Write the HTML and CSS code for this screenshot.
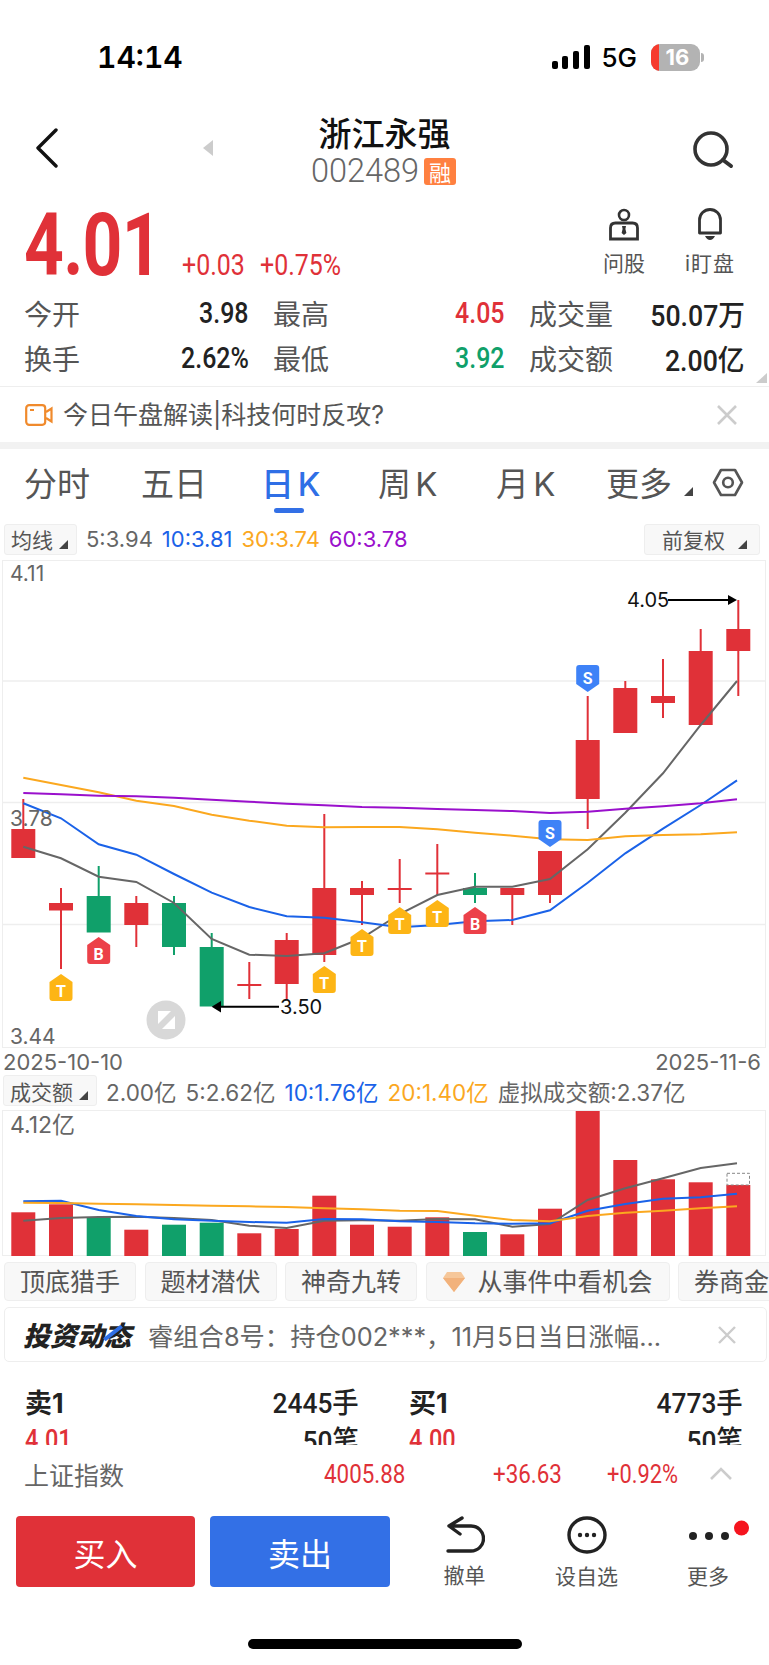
FILE: index.html
```
<!DOCTYPE html>
<html lang="zh-CN">
<head>
    <meta charset="UTF-8">
    <title>浙江永强 002489</title>
    <link rel="stylesheet" href="styles.css">
</head>
<body>
    <!-- Status bar -->
    <div class="status-bar">
        <span class="clock">14:14</span>
        <div class="status-right">
            <svg class="signal" width="38" height="24" viewBox="0 0 38 24">
                <rect x="0" y="16" width="6" height="8" rx="2"/>
                <rect x="10" y="11" width="6" height="13" rx="2"/>
                <rect x="21" y="6" width="6" height="18" rx="2"/>
                <rect x="32" y="0" width="6" height="24" rx="2"/>
            </svg>
            <span class="net">5G</span>
            <div class="battery"><span class="battery-low"></span><span class="battery-num">16</span></div>
            <span class="battery-nub"></span>
        </div>
    </div>

    <!-- Nav -->
    <div class="nav">
        <svg class="nav-back" width="24" height="40" viewBox="0 0 24 40"><path d="M21 2 L3 20 L21 38" fill="none" stroke="#111" stroke-width="3.4" stroke-linecap="round" stroke-linejoin="round"/></svg>
        <span class="nav-prev"></span>
        <div class="nav-title">
            <div class="stock-name">浙江永强</div>
            <div class="stock-code">002489<span class="rong">融</span></div>
        </div>
        <svg class="nav-search" width="42" height="38" viewBox="0 0 42 38"><circle cx="19" cy="18" r="16" fill="none" stroke="#333" stroke-width="3.6"/><path d="M31 29 L39 35" stroke="#333" stroke-width="4" stroke-linecap="round"/></svg>
    </div>

    <!-- Quote -->
    <div class="quote">
        <span class="price din red">4.01</span>
        <span class="change din red">+0.03</span>
        <span class="change din red">+0.75%</span>
        <div class="quote-tools">
            <div class="tool">
                <svg width="32" height="33" viewBox="0 0 32 33"><circle cx="16" cy="7" r="5" fill="none" stroke="#333" stroke-width="2.6"/><path d="M2.5 31 V20 Q2.5 15 7.5 15 H24.5 Q29.5 15 29.5 20 V31 Z" fill="none" stroke="#333" stroke-width="2.8"/><path d="M14 18 H18 L17.4 21 L18.4 25 L16 27 L13.6 25 L14.6 21 Z" fill="#333"/></svg>
                <span>问股</span>
            </div>
            <div class="tool">
                <svg width="26" height="33" viewBox="0 0 26 33"><path d="M2.5 25 V12 a10.5 10.5 0 0 1 21 0 V25 Z" fill="none" stroke="#333" stroke-width="2.8" stroke-linejoin="round"/><path d="M8 28 H18 Q16 32 13 32 Q10 32 8 28 Z" fill="#333"/></svg>
                <span class="tool-watch">i盯盘</span>
            </div>
        </div>
    </div>

    <!-- Stats -->
    <div class="stats">
        <div class="stat"><span>今开</span><b class="din">3.98</b></div>
        <div class="stat"><span>最高</span><b class="din red">4.05</b></div>
        <div class="stat"><span>成交量</span><b class="din wide">50.07万</b></div>
        <div class="stat"><span>换手</span><b class="din">2.62%</b></div>
        <div class="stat"><span>最低</span><b class="din green">3.92</b></div>
        <div class="stat"><span>成交额</span><b class="din wide">2.00亿</b></div>
        <span class="corner"></span>
    </div>

    <!-- Banner -->
    <div class="banner">
        <svg width="28" height="22" viewBox="0 0 28 22"><rect x="1.2" y="1.2" width="19" height="19.6" rx="3" fill="none" stroke="#f08a2c" stroke-width="2.2"/><path d="M21 8 L26.5 4.5 V17.5 L21 14" fill="none" stroke="#f08a2c" stroke-width="2.2"/><path d="M5 6 H9" stroke="#f08a2c" stroke-width="2"/></svg>
        <span class="banner-text">今日午盘解读|科技何时反攻?</span>
        <svg class="close" width="20" height="20" viewBox="0 0 20 20"><path d="M1 1 L19 19 M19 1 L1 19" stroke="#ccc" stroke-width="2.6"/></svg>
    </div>
    <div class="gap"></div>

    <!-- Period tabs -->
    <div class="tabs">
        <span>分时</span>
        <span>五日</span>
        <span class="tab-on">日 K</span>
        <span>周 K</span>
        <span>月 K</span>
        <span class="tab-more">更多<i class="tri"></i></span>
        <svg width="32" height="29" viewBox="0 0 32 29"><path d="M9 2 H23 L30 14.5 L23 27 H9 L2 14.5 Z" fill="none" stroke="#555" stroke-width="2.6" stroke-linejoin="round"/><circle cx="16" cy="14.5" r="4.8" fill="none" stroke="#555" stroke-width="2.6"/></svg>
    </div>

    <!-- MA legend -->
    <div class="legend ma-row">
        <span class="pick pick-ma">均线<i class="tri"></i></span>
        <span class="grey">5:3.94</span>
        <span class="blue">10:3.81</span>
        <span class="orange">30:3.74</span>
        <span class="purple">60:3.78</span>
        <span class="pick pick-fq">前复权<i class="tri"></i></span>
    </div>

    <!-- Candles -->
    <svg class="chart" width="769" height="488" viewBox="0 0 769 488">
        <defs>
            <path id="tag-up" d="M0 0 L11.5 8 V24 Q11.5 27 8.5 27 H-8.5 Q-11.5 27 -11.5 24 V8 Z"/>
            <path id="tag-down" d="M-8.5 0 H8.5 Q11.5 0 11.5 3 V19 L0 27 L-11.5 19 V3 Q-11.5 0 -8.5 0 Z"/>
        </defs>
        <rect class="frame" x="2.5" y="0.5" width="763" height="487"/>
        <path class="grid" d="M3 121 H765 M3 242.5 H765 M3 364.5 H765"/>

        <g class="up">
            <rect x="22.3" y="239" width="2" height="30"/><rect x="11.3" y="269" width="24" height="29"/>
            <rect x="60" y="328" width="2" height="81"/><rect x="49" y="343" width="24" height="7.5"/>
            <rect x="135.3" y="336" width="2" height="51"/><rect x="124.3" y="343" width="24" height="22"/>
            <rect x="248.3" y="402" width="2" height="37"/><rect x="237.3" y="424" width="24" height="2"/>
            <rect x="285.7" y="373" width="2" height="66"/><rect x="274.7" y="380" width="24" height="44"/>
            <rect x="323.3" y="254" width="2" height="148"/><rect x="312.3" y="328" width="24" height="67"/>
            <rect x="361" y="321" width="2" height="44"/><rect x="350" y="328" width="24" height="7"/>
            <rect x="398.7" y="299" width="2" height="44"/><rect x="387.7" y="328" width="24" height="2"/>
            <rect x="436.3" y="284" width="2" height="51"/><rect x="425.3" y="312.5" width="24" height="2"/>
            <rect x="511.3" y="328" width="2" height="37"/><rect x="500.3" y="328" width="24" height="7"/>
            <rect x="549" y="291" width="2" height="52"/><rect x="538" y="291" width="24" height="44"/>
            <rect x="586.7" y="136" width="2" height="133"/><rect x="575.7" y="180" width="24" height="59"/>
            <rect x="624.3" y="121" width="2" height="52"/><rect x="613.3" y="128" width="24" height="45"/>
            <rect x="662" y="99" width="2" height="59"/><rect x="651" y="136" width="24" height="7"/>
            <rect x="699.7" y="69" width="2" height="96"/><rect x="688.7" y="91" width="24" height="74"/>
            <rect x="737.3" y="40" width="2" height="96"/><rect x="726.3" y="69" width="24" height="22"/>
        </g>
        <g class="down">
            <rect x="97.7" y="306" width="2" height="30"/><rect x="86.7" y="336" width="24" height="36.5"/>
            <rect x="173" y="336" width="2" height="59"/><rect x="162" y="343" width="24" height="44"/>
            <rect x="210.7" y="373" width="2" height="73"/><rect x="199.7" y="387" width="24" height="59.5"/>
            <rect x="474" y="313" width="2" height="30"/><rect x="463" y="328" width="24" height="7"/>
        </g>

        <polyline class="line ma5" points="23.3,286.7 61,298.3 98.7,316.7 136.3,322 174,343 211.7,379 249.3,394.7 286.7,396 324.3,393.3 362,378 399.7,354 437.3,335 475,326.7 512.3,326.7 550,319 587.7,289.3 625.3,252.7 663,213.3 700.7,165 737,121"/>
        <polyline class="line ma10" points="23.3,243.3 61,258.3 98.7,284.3 136.3,294.7 174,314 211.7,332.7 249.3,347 286.7,356.3 324.3,357.7 362,362.3 399.7,367.3 437.3,365 475,361.3 512.3,360 550,350.3 587.7,322.7 625.3,293.3 663,268.7 700.7,245 737,220.3"/>
        <polyline class="line ma30" points="23.3,217.7 61,225 98.7,232.3 136.3,240.7 174,246 211.7,254.7 249.3,260.7 286.7,265.7 324.3,267.3 362,267 399.7,267 437.3,269.3 475,272.7 512.3,275.7 550,279.3 587.7,280 625.3,276.3 663,275 700.7,274.3 737,272.3"/>
        <polyline class="line ma60" points="23.3,233 61,234.3 98.7,235.7 136.3,236.3 174,237.7 211.7,239.7 249.3,241.7 286.7,243.7 324.3,245.3 362,247 399.7,247.7 437.3,249 475,250 512.3,251 550,253 587.7,251.7 625.3,248.7 663,246.3 700.7,243.3 737,239.3"/>

        <!-- Trade markers -->
        <use href="#tag-up" x="61" y="414" class="tag-t"/><text class="tag-text" x="61" y="437">T</text>
        <use href="#tag-up" x="98.7" y="377" class="tag-b"/><text class="tag-text" x="98.7" y="400">B</text>
        <use href="#tag-up" x="324.3" y="406" class="tag-t"/><text class="tag-text" x="324.3" y="429">T</text>
        <use href="#tag-up" x="362" y="369" class="tag-t"/><text class="tag-text" x="362" y="392">T</text>
        <use href="#tag-up" x="399.7" y="347" class="tag-t"/><text class="tag-text" x="399.7" y="370">T</text>
        <use href="#tag-up" x="437.3" y="340" class="tag-t"/><text class="tag-text" x="437.3" y="363">T</text>
        <use href="#tag-up" x="475" y="347" class="tag-b"/><text class="tag-text" x="475" y="370">B</text>
        <use href="#tag-down" x="550" y="260" class="tag-s"/><text class="tag-text" x="550" y="279">S</text>
        <use href="#tag-down" x="587.7" y="105" class="tag-s"/><text class="tag-text" x="587.7" y="124">S</text>

        <!-- High / low arrows -->
        <path d="M218 446.7 H279 M668 40 H731" stroke="#000" stroke-width="2"/>
        <polygon points="211.7,446.7 221,441 221,452.4"/>
        <polygon points="737,40 728,35 728,45"/>
        <text class="mark" x="280" y="454">3.50</text>
        <text class="mark" x="627" y="47">4.05</text>

        <text class="axis" x="10" y="21">4.11</text>
        <text class="axis" x="10" y="266">3.78</text>
        <text class="axis" x="10" y="484">3.44</text>

        <!-- Fullscreen toggle -->
        <circle cx="166" cy="460" r="19.5" fill="#d8d8d8"/>
        <polygon points="158,451 171,451 158,464" fill="#fff"/>
        <polygon points="175,456 175,469 162,469" fill="#fff"/>
    </svg>

    <div class="dates"><span>2025-10-10</span><span>2025-11-6</span></div>

    <!-- Volume legend -->
    <div class="legend vol-row">
        <span class="pick pick-vol">成交额<i class="tri"></i></span>
        <span class="grey">2.00亿</span>
        <span class="grey">5:2.62亿</span>
        <span class="blue">10:1.76亿</span>
        <span class="orange">20:1.40亿</span>
        <span class="grey">虚拟成交额:2.37亿</span>
    </div>

    <!-- Volume -->
    <svg class="vol" width="769" height="146" viewBox="0 0 769 146">
        <rect class="frame" x="2.5" y="0.5" width="763" height="145"/>
        <g class="up">
            <rect x="11.3" y="102.3" width="24" height="43.7"/>
            <rect x="49" y="94.3" width="24" height="51.7"/>
            <rect x="124.3" y="119.7" width="24" height="26.3"/>
            <rect x="237.3" y="123.3" width="24" height="22.7"/>
            <rect x="274.7" y="119" width="24" height="27"/>
            <rect x="312.3" y="85.7" width="24" height="60.3"/>
            <rect x="350" y="114.7" width="24" height="31.3"/>
            <rect x="387.7" y="116.7" width="24" height="29.3"/>
            <rect x="425.3" y="107.3" width="24" height="38.7"/>
            <rect x="500.3" y="124.3" width="24" height="21.7"/>
            <rect x="538" y="98.7" width="24" height="47.3"/>
            <rect x="575.7" y="1" width="24" height="145"/>
            <rect x="613.3" y="50" width="24" height="96"/>
            <rect x="651" y="69.3" width="24" height="76.7"/>
            <rect x="688.7" y="72.3" width="24" height="73.7"/>
            <rect x="726.3" y="75" width="24" height="71"/>
        </g>
        <g class="down">
            <rect x="86.7" y="107.7" width="24" height="38.3"/>
            <rect x="162" y="114.7" width="24" height="31.3"/>
            <rect x="199.7" y="112.7" width="24" height="33.3"/>
            <rect x="463" y="122" width="24" height="24"/>
        </g>
        <rect x="727" y="63.3" width="22.5" height="11.7" fill="none" stroke="#888" stroke-width="1" stroke-dasharray="3 2"/>
        <polyline class="line ma5" points="23.3,110.7 61,108 98.7,107 136.3,106.7 174,108 211.7,110 249.3,115.7 286.7,118 324.3,110.7 362,110.3 399.7,110.7 437.3,109 475,109.3 512.3,116.7 550,114 587.7,90 625.3,78.3 663,68.3 700.7,58 737,53.3"/>
        <polyline class="line ma10" points="23.3,91.3 61,90.7 98.7,100 136.3,106 174,109.3 211.7,110.7 249.3,112 286.7,112.7 324.3,109 362,109.3 399.7,111.3 437.3,112 475,113.3 512.3,113.7 550,113.3 587.7,100.7 625.3,94 663,88.7 700.7,87.3 737,83.7"/>
        <polyline class="line ma30" points="23.3,92.7 61,93 98.7,93.7 136.3,94.3 174,95 211.7,95.7 249.3,96.3 286.7,97 324.3,98.3 362,99.3 399.7,100.7 437.3,101 475,105.7 512.3,110 550,111.3 587.7,106 625.3,102.7 663,100.7 700.7,98.3 737,96.3"/>
        <text class="axis axis-vol" x="10" y="23">4.12亿</text>
    </svg>

    <!-- Feature tags -->
    <div class="tags">
        <span class="tag">顶底猎手</span>
        <span class="tag">题材潜伏</span>
        <span class="tag">神奇九转</span>
        <span class="tag tag-wide">
            <svg width="24" height="22" viewBox="0 0 24 22"><path d="M5 1 H19 L23 7 L12 21 L1 7 Z" fill="#f6c79a"/><path d="M1 7 H23 L12 21 Z" fill="#f2b27c"/></svg>
            从事件中看机会
        </span>
        <span class="tag">券商金股</span>
    </div>

    <!-- News -->
    <div class="news">
        <span class="news-logo">投资动态<i class="news-slash"></i></span>
        <span class="news-text">睿组合8号：持仓002***，11月5日当日涨幅...</span>
        <svg class="close" width="18" height="18" viewBox="0 0 18 18"><path d="M1 1 L17 17 M17 1 L1 17" stroke="#ccc" stroke-width="2.4"/></svg>
    </div>

    <!-- Order book, cut off by the index bar -->
    <div class="book">
        <div class="book-col">
            <div class="book-row"><b>卖1</b><b class="din">2445手</b></div>
            <div class="book-row"><span class="din red">4.01</span><span class="din">50笔</span></div>
        </div>
        <div class="book-col">
            <div class="book-row"><b>买1</b><b class="din">4773手</b></div>
            <div class="book-row"><span class="din red">4.00</span><span class="din">50笔</span></div>
        </div>
    </div>

    <!-- Index bar -->
    <div class="index-bar">
        <span class="index-name">上证指数</span>
        <span class="din red index-value">4005.88</span>
        <span class="din red index-diff">+36.63</span>
        <span class="din red index-pct">+0.92%</span>
        <svg width="24" height="14" viewBox="0 0 24 14"><path d="M2 12 L12 2 L22 12" fill="none" stroke="#ccc" stroke-width="2.6"/></svg>
    </div>

    <!-- Actions -->
    <div class="actions">
        <button class="btn btn-buy">买入</button>
        <button class="btn btn-sell">卖出</button>
        <div class="action act-undo">
            <svg width="40" height="37" viewBox="0 0 40 37"><path d="M17 2 L4 10 L15 18 M5 10 H26 a12.5 12.5 0 0 1 0 25 H3" fill="none" stroke="#222" stroke-width="3.4" stroke-linecap="round" stroke-linejoin="round"/></svg>
            <span>撤单</span>
        </div>
        <div class="action act-fav">
            <svg width="40" height="38" viewBox="0 0 40 38"><ellipse cx="20" cy="19" rx="18" ry="17" fill="none" stroke="#222" stroke-width="3.4"/><circle cx="13" cy="19" r="2.2" fill="#222"/><circle cx="20" cy="19" r="2.2" fill="#222"/><circle cx="27" cy="19" r="2.2" fill="#222"/></svg>
            <span>设自选</span>
        </div>
        <div class="action act-more">
            <svg class="more-dots" width="64" height="38" viewBox="0 0 64 38"><circle cx="17" cy="20" r="4" fill="#222"/><circle cx="33" cy="20" r="4" fill="#222"/><circle cx="49" cy="20" r="4" fill="#222"/><circle cx="65.5" cy="12" r="7.5" fill="#f5141e"/></svg>
            <span>更多</span>
        </div>
    </div>

    <div class="home-bar"></div>
</body>
</html>
```

FILE: styles.css
```
* {
    box-sizing: border-box;
}

html, body {
    margin: 0;
    padding: 0;
}

body {
    width: 769px;
    height: 1665px;
    overflow: hidden;
    background: #fff;
    color: #555;
    font-family: Inter, "Noto Sans CJK SC", sans-serif;
}

.red { color: #e03138; }
.green { color: #10a06a; }
.grey { color: #666; }
.blue { color: #1a62e8; }
.orange { color: #fba81f; }
.purple { color: #9a10cc; }

/* The app's numbers are a condensed face, none is installed so squeeze Roboto */
.din {
    display: inline-block;
    font-family: Roboto, "Noto Sans CJK SC", sans-serif;
    white-space: nowrap;
    transform: scaleX(0.86);
    transform-origin: left center;
}

/* Status bar */
.status-bar {
    height: 105px;
    display: flex;
    justify-content: space-between;
    padding: 37px 0 0 97px;
}

.clock {
    font-size: 30px;
    font-weight: 600;
    line-height: 40px;
    color: #000;
    font-variant-numeric: tabular-nums;
}

.status-right {
    display: flex;
    align-items: center;
    height: 40px;
    padding-right: 65px;
}

.signal {
    margin-right: 11px;
}

.net {
    font-size: 26px;
    font-weight: 500;
    color: #000;
    margin-right: 14px;
}

.battery {
    position: relative;
    width: 49px;
    height: 27px;
    border-radius: 9px;
    overflow: hidden;
    background: #b3b3b3;
    text-align: center;
}

.battery-low {
    position: absolute;
    left: 0;
    top: 0;
    width: 8px;
    height: 27px;
    background: #f63b2e;
}

.battery-num {
    position: relative;
    font: 700 22px/27px Inter, sans-serif;
    color: #fff;
    padding-left: 4px;
}

.battery-nub {
    width: 3px;
    height: 9px;
    margin-left: 1px;
    border-radius: 0 3px 3px 0;
    background: #b3b3b3;
}

/* Nav */
.nav {
    position: relative;
    height: 90px;
    display: flex;
    justify-content: center;
}

.nav-back {
    position: absolute;
    left: 35px;
    top: 23px;
}

.nav-prev {
    position: absolute;
    left: 203px;
    top: 35px;
    border-style: solid;
    border-width: 8px 10px 8px 0;
    border-color: transparent #ccc transparent transparent;
}

.nav-title {
    text-align: center;
    width: 180px;
}

.stock-name {
    font-size: 33px;
    line-height: 38px;
    font-weight: 500;
    color: #111;
    margin-top: 10px;
}

.stock-code {
    display: flex;
    align-items: center;
    justify-content: center;
    font: 300 32.5px/36px Roboto, sans-serif;
    color: #666;
    white-space: nowrap;
    margin-left: -2px;
}

.rong {
    width: 32px;
    height: 27px;
    margin-left: 5px;
    border-radius: 3px;
    background: #ff8040;
    color: #fff;
    font: 400 22px/27px "Noto Sans CJK SC", sans-serif;
    text-align: center;
}

.nav-search {
    position: absolute;
    left: 692px;
    top: 26px;
}

/* Quote */
.quote {
    height: 95px;
    display: flex;
    align-items: flex-start;
    padding-left: 24px;
}

.price {
    width: 129px;
    margin: 2px 29px 0 0;
    font-size: 87px;
    font-weight: 700;
    line-height: 96px;
    letter-spacing: -1px;
    transform: scaleX(0.8);
}

.change {
    width: 78px;
    font-size: 29px;
    line-height: 34px;
    margin-top: 53px;
}

.quote-tools {
    margin-left: auto;
    display: flex;
    gap: 40px;
    padding: 13px 34px 0 0;
}

.tool {
    display: flex;
    flex-direction: column;
    align-items: center;
    font-size: 21px;
    line-height: 30px;
    gap: 8px;
    color: #555;
}

.tool-watch {
    letter-spacing: 1px;
}

/* Stats */
.stats {
    position: relative;
    height: 97px;
    display: grid;
    grid-template-columns: 225px 232px 216px;
    grid-auto-rows: 45px;
    column-gap: 24px;
    padding-left: 24px;
    border-bottom: 1px solid #eee;
}

.stat {
    display: flex;
    justify-content: space-between;
    align-items: center;
    font-size: 28px;
    color: #555;
}

.stat b {
    font-size: 29px;
    font-weight: 500;
    color: #222;
    transform-origin: right center;
}

.stat b.red { color: #e03138; }
.stat b.green { color: #10a06a; }
.stat b.wide { transform: scaleX(0.92); }

.corner {
    position: absolute;
    right: 2px;
    bottom: 3px;
    border-style: solid;
    border-width: 0 0 10px 11px;
    border-color: transparent transparent #ccc transparent;
}

/* Banner */
.banner {
    height: 55px;
    display: flex;
    align-items: center;
    padding: 0 32px 0 25px;
}

.banner-text {
    margin: 0 0 4px 10px;
    font-size: 25px;
    color: #555;
    white-space: nowrap;
}

.close {
    margin-left: auto;
}

.gap {
    height: 7px;
    background: #f2f2f2;
}

/* Period tabs */
.tabs {
    height: 70px;
    display: grid;
    grid-template-columns: 117px 120px 117px 118px 110px 106px 32px;
    align-items: center;
    padding: 0 0 4px 24px;
    font-size: 33px;
    word-spacing: -5px;
    color: #555;
    white-space: nowrap;
}

.tab-on {
    position: relative;
    color: #2f6fe6;
    font-weight: 500;
}

.tab-on::after {
    content: "";
    position: absolute;
    left: 13px;
    top: 50px;
    width: 30px;
    height: 5px;
    border-radius: 3px;
    background: #3370e6;
}

.tri {
    display: inline-block;
    border-style: solid;
    border-width: 0 0 9px 9px;
    border-color: transparent transparent #444 transparent;
}

.tab-more .tri {
    margin-left: 12px;
}

/* Legends above the charts */
.legend {
    display: flex;
    align-items: center;
    white-space: nowrap;
}

.ma-row {
    height: 41px;
    padding: 0 9px 1px 4px;
    gap: 9px;
    font-size: 22px;
}

.pick {
    height: 31px;
    display: flex;
    align-items: center;
    justify-content: space-between;
    border: 1px solid #eee;
    border-radius: 3px;
    background: #f8f8f8;
    color: #555;
    padding: 0 8px 0 6px;
    font-size: 21px;
    flex-shrink: 0;
}

.pick .tri {
    margin-top: 10px;
}

.pick-ma {
    width: 73px;
}

.pick-fq {
    width: 116px;
    margin-left: auto;
    padding: 0 12px 0 17px;
}

.vol-row {
    height: 35px;
    padding: 0 0 4px 3px;
    gap: 9px;
    font-size: 22.5px;
}

.pick-vol {
    width: 94px;
}

/* Charts */
.chart, .vol {
    display: block;
}

.frame {
    fill: none;
    stroke: #eee;
}

.grid {
    fill: none;
    stroke: #eee;
    stroke-width: 1.4;
}

.up { fill: #e03138; }
.down { fill: #10a06a; }

.line {
    fill: none;
    stroke-width: 2;
}

.ma5 { stroke: #666; }
.ma10 { stroke: #1a62e8; }
.ma30 { stroke: #fba81f; }
.ma60 { stroke: #9a10cc; }

.tag-t { fill: #fdb515; }
.tag-b { fill: #ec4149; }
.tag-s { fill: #3e82f7; }

.tag-text {
    fill: #fff;
    font: 700 16px Roboto, sans-serif;
    text-anchor: middle;
}

.mark {
    fill: #111;
    font-size: 20px;
}

.axis {
    fill: #666;
    font-size: 21px;
}

.axis-vol {
    font-size: 23px;
}

.dates {
    height: 27px;
    display: flex;
    justify-content: space-between;
    align-items: center;
    padding: 0 8px 0 3px;
    font-size: 22px;
    color: #666;
}

/* Feature tags */
.tags {
    display: flex;
    gap: 8.5px;
    margin-top: 6px;
    padding-left: 4px;
    overflow: hidden;
}

.tag {
    flex: 0 0 132px;
    height: 39px;
    display: flex;
    align-items: center;
    justify-content: center;
    gap: 11px;
    padding-bottom: 3px;
    border: 1px solid #eee;
    border-radius: 4px;
    background: #f8f8f8;
    font-size: 25px;
    color: #555;
    white-space: nowrap;
}

.tag svg {
    margin-top: 3px;
}

.tag-wide {
    flex-basis: 244px;
}

/* News */
.news {
    height: 55px;
    display: flex;
    align-items: center;
    margin: 6px 2px 0 4px;
    padding: 0 30px 0 18px;
    border: 1px solid #eee;
    border-radius: 5px;
}

.news-logo {
    position: relative;
    font-size: 27px;
    font-weight: 900;
    font-style: italic;
    color: #222;
    white-space: nowrap;
}

.news-slash {
    position: absolute;
    left: 88px;
    top: 7px;
    width: 4px;
    height: 22px;
    background: #2f6fe6;
    transform: rotate(52deg);
}

.news-text {
    margin-left: 17px;
    font-size: 25.3px;
    color: #666;
    white-space: nowrap;
}

/* Order book */
.book {
    height: 83px;
    overflow: hidden;
    display: flex;
    gap: 50px;
    padding: 20px 26px 0 25px;
}

.book-col {
    flex: 1;
}

.book-row {
    height: 38px;
    display: flex;
    justify-content: space-between;
    align-items: center;
    font-size: 27px;
    color: #222;
}

.book-row b {
    font-weight: 700;
}

.book-row .din {
    font-weight: 500;
    font-size: 28px;
    transform: scaleX(0.94);
}

.book-row .din:last-child {
    transform-origin: right center;
}

.book-row .din.red {
    color: #e03138;
    transform: scaleX(0.84);
}

/* Index bar */
.index-bar {
    position: relative;
    height: 62px;
    background: #fff;
    display: flex;
    align-items: center;
    padding: 0 0 4px 24px;
    font-size: 26px;
}

.index-name {
    width: 300px;
    font-size: 25px;
    color: #666;
}

.index-value {
    width: 169px;
}

.index-diff {
    width: 114px;
}

.index-pct {
    width: 102px;
    transform: scaleX(0.84);
}

/* Actions */
.actions {
    position: relative;
    height: 132px;
    padding: 9px 0 0 16px;
    display: flex;
    align-items: flex-start;
    gap: 15px;
}

.btn {
    width: 179px;
    height: 71px;
    border: none;
    border-radius: 4px;
    color: #fff;
    font: 400 32px "Noto Sans CJK SC", sans-serif;
}

.btn-buy { background: #e03138; }
.btn-sell { background: #3370e6; width: 180px; }

.action {
    display: flex;
    flex-direction: column;
    align-items: center;
    font-size: 21px;
    color: #555;
    gap: 8px;
    line-height: 30px;
    white-space: nowrap;
}

.act-undo { margin-left: 37.5px; width: 44px; }
.act-fav { margin-left: 53.5px; width: 63px; }
.act-more { margin-left: 43px; width: 64px; }

.more-dots {
    overflow: visible;
}

.home-bar {
    width: 274px;
    height: 10px;
    margin-left: 248px;
    border-radius: 5px;
    background: #000;
}
```
